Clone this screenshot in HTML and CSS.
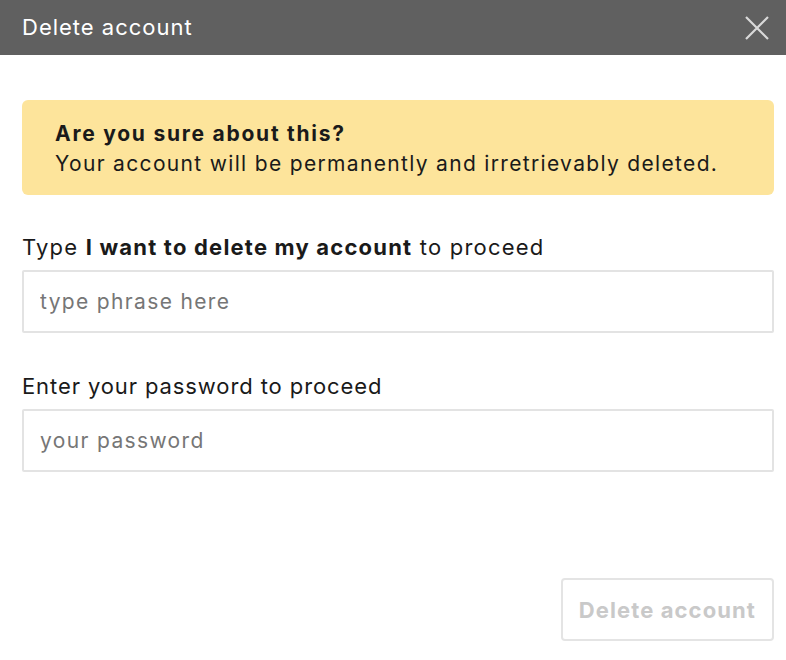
FILE: index.html
```html
<!DOCTYPE html>
<html lang="en">
<head>
<meta charset="utf-8">
<title>Delete account</title>
<link rel="stylesheet" href="styles.css">
</head>
<body>
<div class="dialog">
  <header class="dialog-header">
    <h1 class="dialog-title">Delete account</h1>
    <button class="close-btn" aria-label="Close">
      <svg width="26" height="26" viewBox="0 0 26 26"><path d="M2 2 L24 24 M24 2 L2 24" stroke="#d9d9d9" stroke-width="2.2" fill="none"/></svg>
    </button>
  </header>
  <main class="dialog-body">
    <div class="alert">
      <p class="alert-title">Are you sure about this?</p>
      <p class="alert-text">Your account will be permanently and irretrievably deleted.</p>
    </div>
    <label class="field">
      <span class="field-label field-label-phrase">Type <b>I want to delete my account</b> to proceed</span>
      <input class="field-input" type="text" placeholder="type phrase here">
    </label>
    <label class="field">
      <span class="field-label">Enter your password to proceed</span>
      <input class="field-input" type="password" placeholder="your password">
    </label>
  </main>
  <footer class="dialog-footer">
    <button class="delete-btn" disabled>Delete account</button>
  </footer>
</div>
</body>
</html>
```

FILE: styles.css
```css
* { box-sizing: border-box; }
html, body { margin: 0; padding: 0; background: #fff; }
body { font-family: Inter, "Helvetica Neue", Arial, sans-serif; color: #1a1a1a; }
.dialog { width: 786px; height: 660px; display: flex; flex-direction: column; }
.dialog-header {
  height: 55px; background: #606060; display: flex; align-items: center;
  justify-content: space-between; padding: 0 16px 0 22px;
}
.dialog-title { margin: 0 0 2px; font-size: 22px; font-weight: 400; color: #fff; letter-spacing: 1px; }
.close-btn { background: none; border: 0; padding: 0; width: 26px; height: 26px; display: flex; }
.dialog-body { padding: 45px 12px 0 22px; display: flex; flex-direction: column; }
.alert {
  background: #fde49b; border-radius: 6px; padding: 19px 33px 16px 33px;
}
.alert p { margin: 0; font-size: 21px; line-height: 30px; }
.alert-title { font-weight: 700; letter-spacing: 1.75px; }
.alert-text { letter-spacing: 1.33px; }
.field { display: flex; flex-direction: column; margin-top: 37px; }
.field + .field { margin-top: 38px; }
.field-label { font-size: 22px; line-height: 30px; margin-bottom: 8px; letter-spacing: 0.9px; }
.field-label-phrase { letter-spacing: 1.2px; }
.field-label b { font-weight: 700; }
.field-input {
  height: 63px; border: 2px solid #e3e3e3; border-radius: 2px; padding: 0 16px;
  font-family: inherit; font-size: 21px; letter-spacing: 1.35px; color: #1a1a1a; outline: none;
}
.field-input::placeholder { color: #767676; }
.dialog-footer { margin-top: auto; padding: 0 12px 19px 22px; display: flex; justify-content: flex-end; }
.delete-btn {
  height: 63px; padding: 0 16px; border: 2px solid #e4e4e4; border-radius: 4px; background: #fff;
  font-family: inherit; font-size: 22px; font-weight: 700; letter-spacing: 1.1px; color: #c9c9c9;
}
```
